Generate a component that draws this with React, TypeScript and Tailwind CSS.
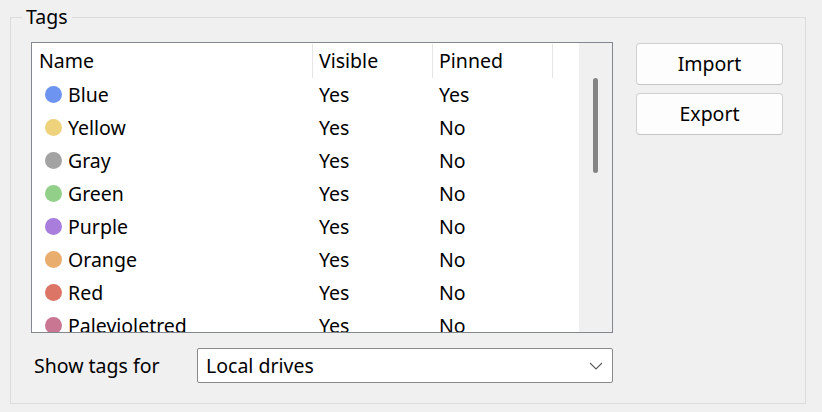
const tags = [
  { name: 'Blue', color: '#6d94f0', visible: 'Yes', pinned: 'Yes' },
  { name: 'Yellow', color: '#efd27c', visible: 'Yes', pinned: 'No' },
  { name: 'Gray', color: '#a3a3a3', visible: 'Yes', pinned: 'No' },
  { name: 'Green', color: '#92d08a', visible: 'Yes', pinned: 'No' },
  { name: 'Purple', color: '#a87ddb', visible: 'Yes', pinned: 'No' },
  { name: 'Orange', color: '#e9ad6e', visible: 'Yes', pinned: 'No' },
  { name: 'Red', color: '#dc7566', visible: 'Yes', pinned: 'No' },
  { name: 'Palevioletred', color: '#c97693', visible: 'Yes', pinned: 'No' },
]

export default function App() {
  return (
    <div className="w-[822px] h-[412px] bg-[#f0f0f0] pt-[17px] pl-[10px] text-[19.5px] text-black font-['Noto_Sans',sans-serif] overflow-hidden">
      {/* Tags group box */}
      <div className="relative w-[796px] h-[387px] border border-[#dcdcdc] pt-[24px] pl-[20px]">
        <span className="absolute left-[11px] top-[-13px] px-[4px] bg-[#f0f0f0] leading-[24px]">Tags</span>

        <div className="flex">
          {/* List */}
          <div className="w-[582px] h-[291px] border border-[#828790] bg-white flex overflow-hidden">
            <div className="flex-1 flex flex-col">
              <div className="flex h-[35px] shrink-0 items-center">
                <div className="w-[280px] pl-[7px]">Name</div>
                <div className="w-[120px] h-[34px] flex items-center pl-[6px] border-l border-[#e5e5e5]">Visible</div>
                <div className="w-[120px] h-[34px] flex items-center pl-[6px] border-l border-[#e5e5e5]">Pinned</div>
                <div className="w-px h-[34px] bg-[#e5e5e5]" />
              </div>
              <div className="flex-1 overflow-hidden">
                {tags.map((t) => (
                  <div key={t.name} className="flex h-[33px] items-center">
                    <div className="w-[280px] flex items-center pl-[13px]">
                      <span className="w-[17px] h-[17px] rounded-full shrink-0" style={{ backgroundColor: t.color }} />
                      <span className="ml-[6px]">{t.name}</span>
                    </div>
                    <div className="w-[120px] pl-[7px]">{t.visible}</div>
                    <div className="w-[120px] pl-[7px]">{t.pinned}</div>
                  </div>
                ))}
              </div>
            </div>
            {/* Scrollbar */}
            <div className="w-[33px] bg-[#f0f0f0] pt-[35px] pl-[14px]">
              <div className="w-[5px] h-[95px] rounded-full bg-[#858585]" />
            </div>
          </div>

          {/* Buttons */}
          <div className="ml-[23px] mt-px flex flex-col gap-[8px]">
            <button className="w-[147px] h-[42px] bg-[#fdfdfd] border border-[#d0d0d0] border-b-[#c4c4c4] rounded-[4px]">Import</button>
            <button className="w-[147px] h-[42px] bg-[#fdfdfd] border border-[#d0d0d0] border-b-[#c4c4c4] rounded-[4px]">Export</button>
          </div>
        </div>

        {/* Show tags for */}
        <div className="flex items-center mt-[15px]">
          <span className="w-[166px] pl-[3px]">Show tags for</span>
          <div className="w-[416px] h-[35px] bg-white border border-[#8a8a8a] rounded-[2px] flex items-center pl-[8px] pr-[9px]">
            <span className="flex-1">Local drives</span>
            <svg width="14" height="8" viewBox="0 0 14 8" fill="none">
              <path d="M1 1 L7 7 L13 1" stroke="#5a5a5a" strokeWidth="1.1" />
            </svg>
          </div>
        </div>
      </div>
    </div>
  )
}
